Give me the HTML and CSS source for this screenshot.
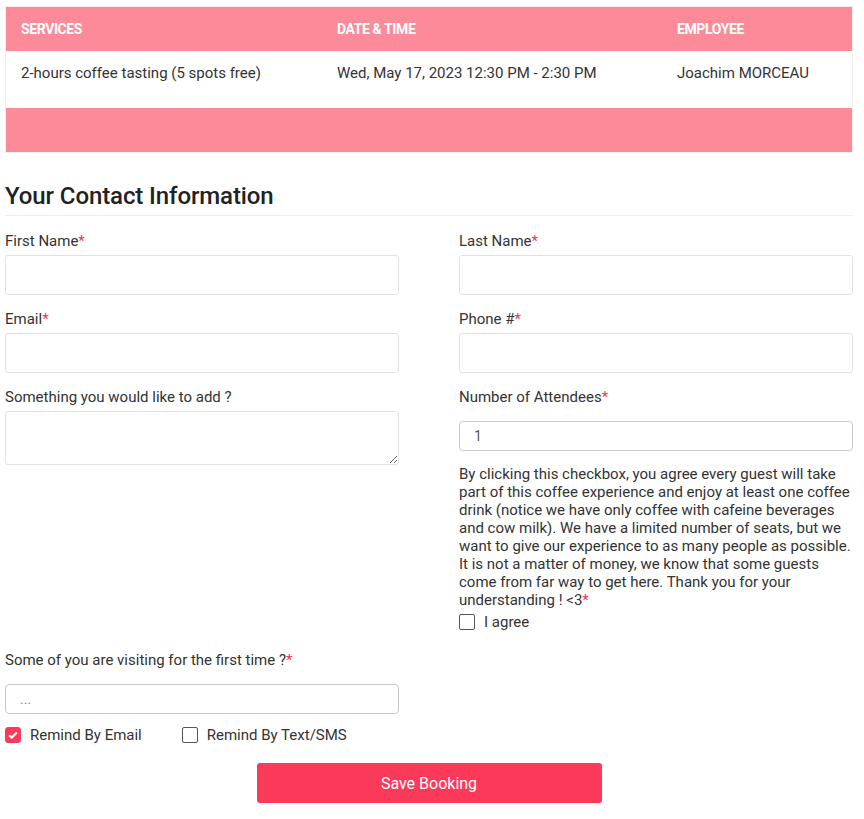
FILE: index.html
```html
<!DOCTYPE html>
<html>
  <head>
    <title>Booking</title>
    <meta charset="UTF-8" />
    <link rel="stylesheet" href="styles.css">
  </head>
  <body>
    <div class="page">
      <table class="summary">
        <thead>
          <tr>
            <th class="col-service">Services</th>
            <th class="col-date">Date &amp; Time</th>
            <th>Employee</th>
          </tr>
        </thead>
        <tbody>
          <tr>
            <td>2-hours coffee tasting (5 spots free)</td>
            <td>Wed, May 17, 2023 12:30 PM - 2:30 PM</td>
            <td>Joachim MORCEAU</td>
          </tr>
        </tbody>
        <tfoot>
          <tr><td colspan="3"></td></tr>
        </tfoot>
      </table>

      <h2 class="title">Your Contact Information</h2>

      <div class="form">
        <div class="field">
          <label>First Name<span class="req">*</span></label>
          <input type="text" class="input">
        </div>
        <div class="field">
          <label>Last Name<span class="req">*</span></label>
          <input type="text" class="input">
        </div>
        <div class="field">
          <label>Email<span class="req">*</span></label>
          <input type="text" class="input">
        </div>
        <div class="field">
          <label>Phone #<span class="req">*</span></label>
          <input type="text" class="input">
        </div>
        <div class="field">
          <label>Something you would like to add ?</label>
          <textarea class="input area"></textarea>
        </div>
        <div class="field">
          <label>Number of Attendees<span class="req">*</span></label>
          <input type="text" class="input small" value="1">
          <p class="terms">By clicking this checkbox, you agree every guest will take part of this coffee experience and enjoy at least one coffee drink (notice we have only coffee with cafeine beverages and cow milk). We have a limited number of seats, but we want to give our experience to as many people as possible. It is not a matter of money, we know that some guests come from far way to get here. Thank you for your understanding ! &lt;3<span class="req">*</span></p>
          <label class="check"><span class="box"></span>I agree</label>
        </div>
        <div class="field first-time">
          <label>Some of you are visiting for the first time ?<span class="req">*</span></label>
          <input type="text" class="input small" placeholder="...">
        </div>
      </div>

      <div class="reminders">
        <label class="check"><span class="box checked"><svg width="10" height="8" viewBox="0 0 10 8"><path d="M1.2 4.2 L3.8 6.6 L8.8 1.4" fill="none" stroke="#fff" stroke-width="2.2"/></svg></span>Remind By Email</label>
        <label class="check"><span class="box"></span>Remind By Text/SMS</label>
      </div>

      <div class="actions">
        <button class="save">Save Booking</button>
      </div>
    </div>
  </body>
</html>
```

FILE: styles.css
```css
body {
  margin: 0;
  background: #fff;
  font-family: Roboto, "Liberation Sans", sans-serif;
  color: #333;
}

.page {
  width: 848px;
  padding: 6px 5px 0 5px;
}

.summary {
  width: 100%;
  border-collapse: collapse;
  border: 1px solid #eee;
  font-size: 15px;
}

.summary th {
  background: #fc8a98;
  color: #fff;
  text-transform: uppercase;
  text-align: left;
  font-size: 14px;
  font-weight: 700;
  letter-spacing: -0.4px;
  height: 43px;
  padding: 0 0 1px 15px;
}

.summary .col-service {
  width: 301px;
}

.summary .col-date {
  width: 325px;
}

.summary td {
  height: 44px;
  padding: 0 0 13px 15px;
  vertical-align: middle;
}

.summary tfoot td {
  background: #fc8a98;
  height: 44px;
  padding: 0;
}

.title {
  font-size: 24px;
  font-weight: 500;
  letter-spacing: -0.1px;
  margin: 29px 0 0 0;
  padding-bottom: 5px;
  border-bottom: 1px solid #eee;
  color: #222;
}

.form {
  display: grid;
  grid-template-columns: 394px 394px;
  column-gap: 60px;
  margin-top: 16px;
}

.field {
  display: flex;
  flex-direction: column;
  margin-bottom: 15px;
}

.field > label {
  font-size: 15px;
  line-height: 18px;
  margin-bottom: 5px;
}

.req {
  color: #f0344f;
}

.input {
  box-sizing: border-box;
  height: 40px;
  border: 1px solid #e2e2e2;
  border-radius: 3px;
  font-family: inherit;
  font-size: 14px;
  padding: 0 14px;
  color: #555;
}

.input.area {
  height: 54px;
}

.input.small {
  height: 30px;
  border-color: #c8c8c8;
  border-radius: 4px;
  margin-top: 10px;
}

.input::placeholder {
  color: #888;
}

.terms {
  font-size: 15px;
  line-height: 18px;
  margin: 14px 0 4px 0;
}

.check {
  display: flex;
  align-items: center;
  font-size: 15px;
}

.box {
  box-sizing: border-box;
  width: 16px;
  height: 16px;
  border: 1px solid #555;
  border-radius: 2px;
  margin-right: 9px;
  display: flex;
  align-items: center;
  justify-content: center;
}

.box.checked {
  background: #f93a5a;
  border-color: #f93a5a;
  border-radius: 3px;
}

.first-time {
  grid-column: 1;
  margin-bottom: 12px;
}

.reminders {
  display: flex;
  gap: 40px;
}

.actions {
  display: flex;
  justify-content: center;
  margin-top: 19px;
}

.save {
  width: 345px;
  height: 40px;
  background: #fb3a5a;
  color: #fff;
  border: none;
  border-radius: 3px;
  font-family: inherit;
  font-size: 16px;
}
```
